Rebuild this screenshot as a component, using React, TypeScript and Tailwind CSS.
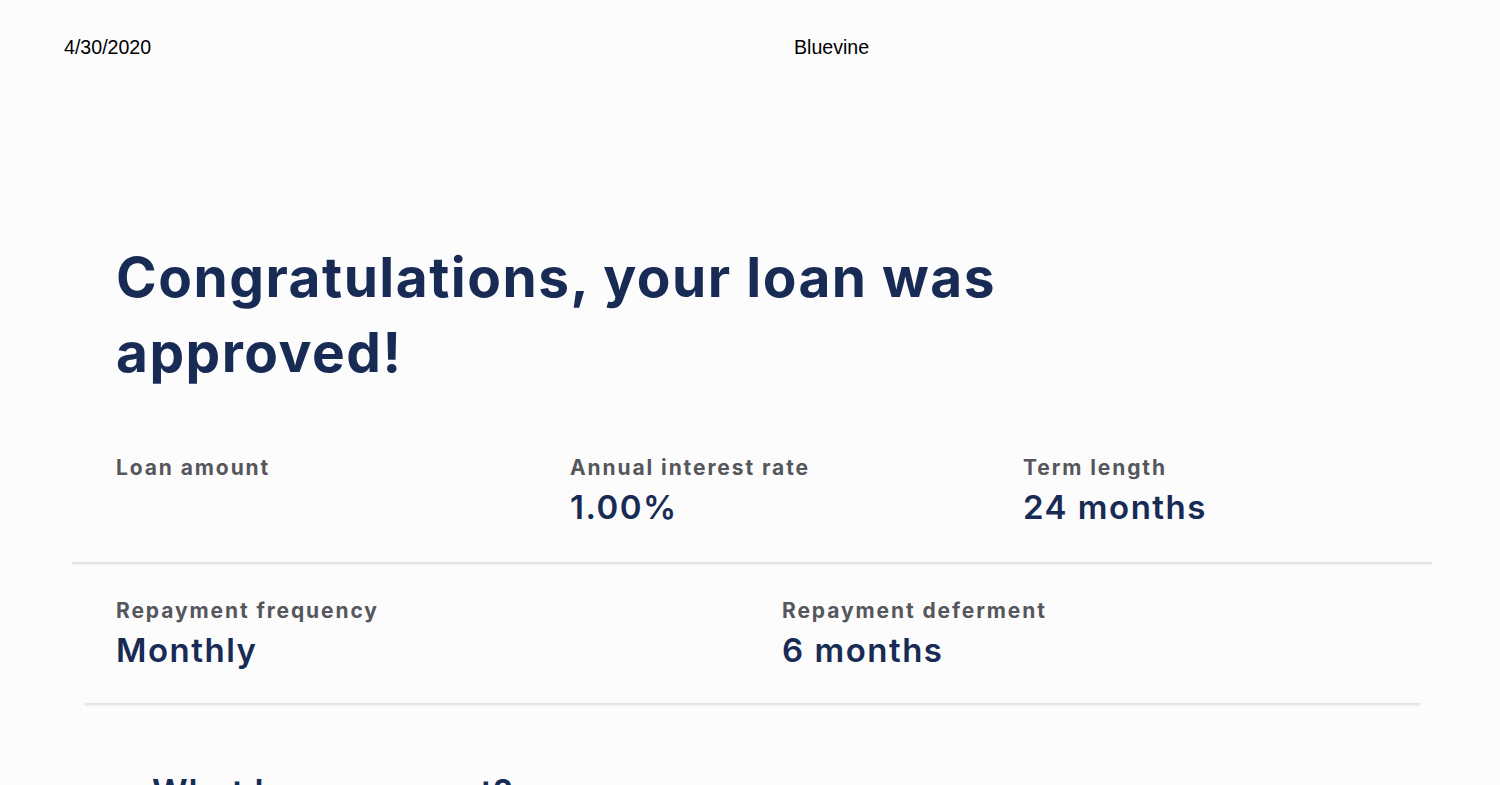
import React from 'react';

const Stat = ({ label, value }: { label: string; value?: string }) => (
  <div className="flex flex-col">
    <span className="text-[21px] leading-[26px] font-bold tracking-[1.9px] text-[#55575c]">{label}</span>
    {value && (
      <span className="mt-[6px] text-[33px] leading-[40px] font-semibold tracking-[1.5px] text-[#172b55]">{value}</span>
    )}
  </div>
);

const Divider = ({ className }: { className: string }) => (
  <div className={`h-[2px] bg-[#e4e4e4] shadow-[0_1px_3px_rgba(0,0,0,0.07)] ${className}`} />
);

const App = () => {
  return (
    <div className="min-h-screen bg-[#fcfcfc] font-['Inter',sans-serif] overflow-hidden">
      {/* Print header */}
      <div className="flex pt-[35px] font-['Liberation_Sans',Arial,sans-serif] text-[19.6px] leading-[24px] text-black">
        <span className="ml-[64px] w-[730px]">4/30/2020</span>
        <span>Bluevine</span>
      </div>

      {/* Title */}
      <h1 className="mt-[181px] ml-[116px] w-[960px] text-[55px] leading-[75px] font-bold text-[#172b55] tracking-[1.5px]">
        Congratulations, your loan was approved!
      </h1>

      {/* First row */}
      <div className="mt-[65px] pl-[116px] grid grid-cols-[454px_453px_auto] pb-[35px]">
        <Stat label="Loan amount" />
        <Stat label="Annual interest rate" value="1.00%" />
        <Stat label="Term length" value="24 months" />
      </div>

      {/* Second row card */}
      <Divider className="ml-[72px] mr-[68px]" />
      <div className="mx-[85px] pl-[31px] pt-[34px] pb-[33px] grid grid-cols-[666px_auto]">
        <Stat label="Repayment frequency" value="Monthly" />
        <Stat label="Repayment deferment" value="6 months" />
      </div>
      <Divider className="ml-[85px] mr-[80px]" />

      <h2 className="mt-[63px] ml-[152px] text-[35px] leading-[48px] font-semibold tracking-[0.8px] text-[#172b55]">
        What happens next?
      </h2>
    </div>
  );
};

export default App;
